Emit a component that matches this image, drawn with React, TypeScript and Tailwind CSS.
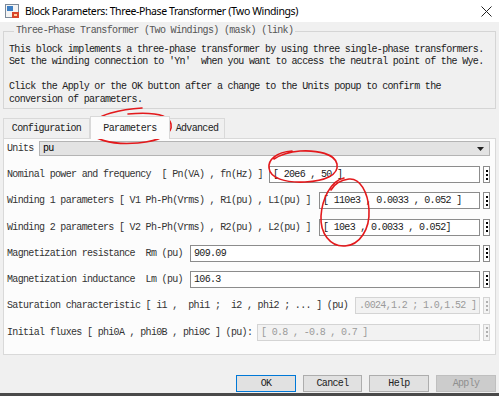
import React from 'react';

const mono = "font-['Liberation_Mono',monospace] text-[10px] tracking-[-0.67px]";

const DotsButton: React.FC<{ disabled?: boolean }> = ({ disabled }) => (
  <div
    className={`w-[7px] h-[17px] flex flex-col items-center justify-center gap-[2px] border ${
      disabled ? 'border-[#d4d4d4] bg-[#f4f4f4]' : 'border-[#8c8c8c] bg-white'
    }`}
  >
    <span className={`w-[2px] h-[2px] ${disabled ? 'bg-[#b0b0b0]' : 'bg-black'}`} />
    <span className={`w-[2px] h-[2px] ${disabled ? 'bg-[#b0b0b0]' : 'bg-black'}`} />
    <span className={`w-[2px] h-[2px] ${disabled ? 'bg-[#b0b0b0]' : 'bg-black'}`} />
  </div>
);

type Row = { label: string; value: string; labelW: string; disabled?: boolean };

const rows: Row[] = [
  { label: 'Nominal power and frequency  [ Pn(VA) , fn(Hz) ]', value: '[ 20e6 , 50 ]', labelW: 'w-[262px]' },
  { label: 'Winding 1 parameters [ V1 Ph-Ph(Vrms) , R1(pu) , L1(pu) ]', value: '[ 110e3 , 0.0033 , 0.052 ]', labelW: 'w-[312px]' },
  { label: 'Winding 2 parameters [ V2 Ph-Ph(Vrms) , R2(pu) , L2(pu) ]', value: '[ 10e3 , 0.0033 , 0.052]', labelW: 'w-[312px]' },
  { label: 'Magnetization resistance  Rm (pu)', value: '909.09', labelW: 'w-[183px]' },
  { label: 'Magnetization inductance  Lm (pu)', value: '106.3', labelW: 'w-[183px]' },
  {
    label: 'Saturation characteristic [ i1 ,  phi1 ;  i2 , phi2 ; ... ] (pu)',
    value: '.0024,1.2 ; 1.0,1.52 ]',
    labelW: 'w-[348px]',
    disabled: true,
  },
  { label: 'Initial fluxes [ phi0A , phi0B , phi0C ] (pu):', value: '[ 0.8 , -0.8 , 0.7 ]', labelW: 'w-[250px]', disabled: true },
];

export default function App() {
  return (
    <div className="relative w-[499px] h-[396px] overflow-hidden bg-[#f0f0f0] flex flex-col">
      {/* title bar */}
      <div className="h-[22px] bg-white flex items-center pl-[5px] pr-[6px] flex-none">
        <svg width="15" height="15" viewBox="0 0 15 15" className="flex-none">
          <rect x="0.5" y="0.5" width="13" height="13" fill="#f4f4f4" stroke="#7d8a99" />
          <rect x="2" y="2" width="6" height="5" fill="#3d7fc4" />
          <rect x="7" y="8" width="7" height="6" fill="#d8452b" />
          <rect x="9" y="10" width="3" height="2" fill="#ffd0a0" />
        </svg>
        <span className="ml-[5px] font-['Noto_Sans',sans-serif] text-[10.5px] tracking-[-0.4px] text-black leading-none">
          Block Parameters: Three-Phase Transformer (Two Windings)
        </span>
        <svg width="11" height="11" viewBox="0 0 11 11" className="ml-auto mr-[1px]">
          <path d="M0.5 0.5 L10.5 10.5 M10.5 0.5 L0.5 10.5" stroke="#222" strokeWidth="1" />
        </svg>
      </div>

      <div className={`px-[3px] flex flex-col flex-none ${mono}`}>
        {/* description group */}
        <fieldset className="mt-[3px] border border-[#d5d5d5] pl-[5px] pt-[6px] pb-[2px] leading-[12.5px] text-[#1a1a1a]">
          <legend className="ml-[5px] px-[2px] text-[#555] leading-[12.5px]">
            Three-Phase Transformer (Two Windings) (mask) (link)
          </legend>
          <div className="whitespace-pre">
            {'This block implements a three-phase transformer by using three single-phase transformers.\nSet the winding connection to \'Yn\'  when you want to access the neutral point of the Wye.\n\nClick the Apply or the OK button after a change to the Units popup to confirm the\nconversion of parameters.'}
          </div>
        </fieldset>

        {/* tabs */}
        <div className="mt-[9px] flex items-end h-[20px] text-[#222]">
          <div className="w-[87px] h-[20px] flex items-center justify-center border border-b-0 border-[#d9d9d9] bg-[#f0f0f0]">
            Configuration
          </div>
          <div className="relative z-10 w-[80px] h-[23px] -mb-px flex items-center justify-center border border-b-0 border-[#d9d9d9] bg-[#fcfcfc]">
            Parameters
          </div>
          <div className="w-[55px] h-[20px] flex items-center justify-center border border-b-0 border-l-0 border-[#d9d9d9] bg-[#f0f0f0]">
            Advanced
          </div>
        </div>

        {/* tab panel */}
        <div className="h-[217px] border border-[#d9d9d9] bg-[#fcfcfc] pl-[3px] pr-[5px] pt-[2px] flex flex-col text-[#333]">
          <div className="flex items-center h-[15px]">
            <span className="w-[32px] flex-none">Units</span>
            <div className="flex-1 h-[15px] flex items-center justify-between border border-[#b4b4b4] bg-[#e3e3e3] pl-[3px] pr-[5px] text-black">
              <span>pu</span>
              <svg width="7" height="4" viewBox="0 0 7 4">
                <path d="M0 0 L7 0 L3.5 4 Z" fill="#222" />
              </svg>
            </div>
          </div>

          <div className="mt-[10px] flex flex-col gap-[9.3px]">
            {rows.map((r) => (
              <div key={r.label} className="flex items-center h-[17px]">
                <span className={`${r.labelW} flex-none whitespace-pre`}>{r.label}</span>
                <div
                  className={`flex-1 h-[17px] min-w-0 overflow-hidden flex items-center whitespace-pre border px-[3px] ${
                    r.disabled
                      ? 'border-[#d4d4d4] bg-[#f2f2f2] text-[#9a9a9a]'
                      : 'border-[#8c8c8c] bg-white text-[#222]'
                  }`}
                >
                  {r.value}
                </div>
                <div className="ml-[3px]">
                  <DotsButton disabled={r.disabled} />
                </div>
              </div>
            ))}
          </div>
        </div>

        {/* buttons */}
        <div className="mt-[20px] flex justify-end gap-[7px] text-[#222]">
          <button className="w-[60px] h-[17px] border border-[#0078d7] bg-[#e1e1e1] flex items-center justify-center">OK</button>
          <button className="w-[59px] h-[17px] border border-[#adadad] bg-[#e1e1e1] flex items-center justify-center">Cancel</button>
          <button className="w-[60px] h-[17px] border border-[#adadad] bg-[#e1e1e1] flex items-center justify-center">Help</button>
          <button className="w-[60px] h-[17px] border border-[#bfbfbf] bg-[#cccccc] text-[#8f8f8f] flex items-center justify-center">Apply</button>
        </div>
      </div>

      <div className="mt-auto h-[3px] bg-[#4a4a4a] flex-none" />

      {/* red hand-drawn annotations */}
      <svg className="absolute left-0 top-0 pointer-events-none" width="499" height="396" viewBox="0 0 499 396" fill="none">
        <path
          d="M142 108 C125 109 93 114 91 127 C89 140 112 145 138 143 C160 141 173 134 171 124 C169 114 152 112 128 114"
          stroke="#e3191c"
          strokeWidth="1.6"
          strokeLinecap="round"
        />
        <path
          d="M292 151 C276 152 268 160 269 168 C270 178 285 183 305 182 C325 181 339 175 337 164 C335 154 318 150 300 151 C288 152 280 155 274 159"
          stroke="#e3191c"
          strokeWidth="1.6"
          strokeLinecap="round"
        />
        <path
          d="M344 178 C330 181 322 200 321 216 C320 233 330 247 345 246 C360 245 370 229 369 210 C368 192 360 178 349 179 C340 180 334 185 331 190"
          stroke="#e3191c"
          strokeWidth="1.6"
          strokeLinecap="round"
        />
      </svg>
    </div>
  );
}
